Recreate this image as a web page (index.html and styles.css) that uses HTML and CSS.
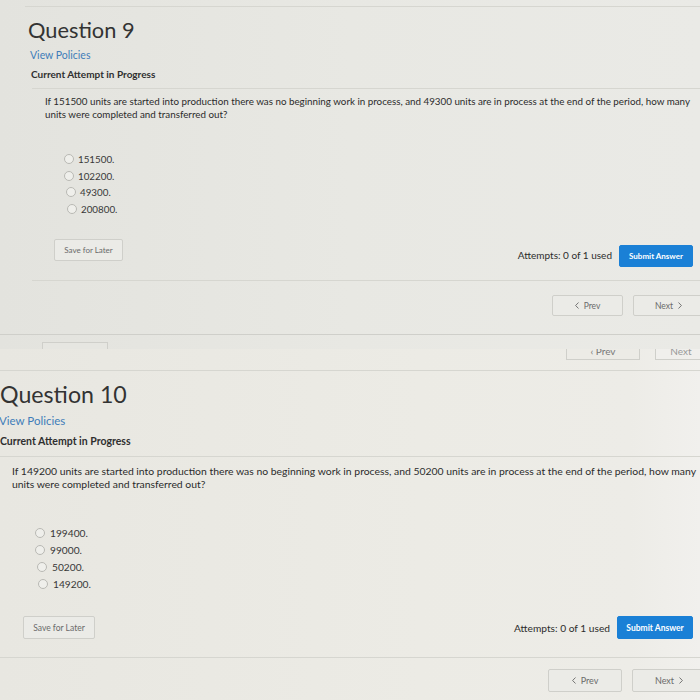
FILE: index.html
```html
<!DOCTYPE html>
<html>
<head>
<meta charset="utf-8">
<link rel="stylesheet" href="styles.css">
</head>
<body>
<section class="panel p1">
  <div class="rule rule-top"></div>
  <h1 class="title">Question 9</h1>
  <a class="policies">View Policies</a>
  <div class="attempt">Current Attempt in Progress</div>
  <div class="rule rule-q"></div>
  <p class="qtext">If 151500 units are started into production there was no beginning work in process, and 49300 units are in process at the end of the period, how many<br>units were completed and transferred out?</p>
  <ul class="options">
    <li><span class="radio"></span>151500.</li>
    <li><span class="radio"></span>102200.</li>
    <li><span class="radio"></span>49300.</li>
    <li><span class="radio"></span>200800.</li>
  </ul>
  <div class="actions">
    <button class="btn save">Save for Later</button>
    <div class="right">
      <span class="attempts">Attempts: 0 of 1 used</span>
      <button class="btn submit">Submit Answer</button>
    </div>
  </div>
  <div class="rule rule-nav"></div>
  <div class="nav">
    <button class="btn prev"><svg class="chev" viewBox="0 0 4 7"><polyline points="3.5,0.5 0.6,3.5 3.5,6.5"/></svg>Prev</button>
    <button class="btn next">Next<svg class="chev chev-r" viewBox="0 0 4 7"><polyline points="0.5,0.5 3.4,3.5 0.5,6.5"/></svg></button>
  </div>
  <div class="tail">
    <div class="tail-line"></div>
    <div class="tail-btn"></div>
  </div>
</section>
<section class="panel p2">
  <div class="head-nav">
    <div class="cut prev-cut"><span>&#8249; Prev</span></div>
    <div class="cut next-cut"><span>Next</span></div>
  </div>
  <div class="rule rule-top2"></div>
  <h1 class="title">Question 10</h1>
  <a class="policies">View Policies</a>
  <div class="attempt">Current Attempt in Progress</div>
  <div class="rule rule-q"></div>
  <p class="qtext">If 149200 units are started into production there was no beginning work in process, and 50200 units are in process at the end of the period, how many<br>units were completed and transferred out?</p>
  <ul class="options">
    <li><span class="radio"></span>199400.</li>
    <li><span class="radio"></span>99000.</li>
    <li><span class="radio"></span>50200.</li>
    <li><span class="radio"></span>149200.</li>
  </ul>
  <div class="actions">
    <button class="btn save">Save for Later</button>
    <div class="right">
      <span class="attempts">Attempts: 0 of 1 used</span>
      <button class="btn submit">Submit Answer</button>
    </div>
  </div>
  <div class="rule rule-nav"></div>
  <div class="nav">
    <button class="btn prev"><svg class="chev" viewBox="0 0 4 7"><polyline points="3.5,0.5 0.6,3.5 3.5,6.5"/></svg>Prev</button>
    <button class="btn next">Next<svg class="chev chev-r" viewBox="0 0 4 7"><polyline points="0.5,0.5 3.4,3.5 0.5,6.5"/></svg></button>
  </div>
</section>
</body>
</html>
```

FILE: styles.css
```css
html, body {
  margin: 0;
  padding: 0;
  width: 700px;
  height: 700px;
  overflow: hidden;
  font-family: Lato, "Liberation Sans", sans-serif;
  color: #2e2e2e;
}

.panel {
  position: relative;
  overflow: hidden;
  box-sizing: border-box;
}

.p1 {
  height: 349px;
  background: linear-gradient(90deg, #e3e3de 0%, #e8e8e3 50%, #eaeae6 100%);
  padding-left: 28px;
}

.p2 {
  height: 351px;
  background: linear-gradient(90deg, #e8e7e1 0%, #ecebe5 60%, #edece7 90%, #f1f0ed 100%);
  padding-left: 0;
}

.rule {
  height: 1px;
  background: #d6d6d0;
}

.btn {
  font-family: Lato, "Liberation Sans", sans-serif;
  box-sizing: border-box;
  border: 1px solid #cfcfca;
  background: #ebebe7;
  color: #6a6a6a;
  border-radius: 2px;
  padding: 0;
  cursor: pointer;
  display: inline-flex;
  align-items: center;
  justify-content: center;
}

.chev {
  width: 4px;
  height: 7px;
  margin-right: 5px;
  fill: none;
  stroke: #666;
  stroke-width: 0.9;
}

.chev-r {
  margin-right: 0;
  margin-left: 5px;
}

/* ---------- panel 1 ---------- */
.p1 .rule-top {
  margin-top: 6px;
  margin-left: -3px;
}

.title {
  margin: 0;
  font-weight: 400;
  color: #333;
}

.p1 .title {
  margin-top: 9px;
  font-size: 21.8px;
  line-height: 28px;
}

.policies {
  display: block;
  color: #3f7db9;
}

.p1 .policies {
  margin-top: 4px;
  margin-left: 2px;
  font-size: 10.5px;
  line-height: 14px;
}

.attempt {
  font-weight: 700;
  color: #2f2f2f;
}

.p1 .attempt {
  margin-top: 5px;
  margin-left: 3px;
  font-size: 10px;
  line-height: 14px;
}

.p1 .rule-q {
  margin-top: 7px;
  margin-left: 4px;
}

.qtext {
  margin: 0;
  white-space: nowrap;
  color: #2b2b2b;
}

.p1 .qtext {
  margin-top: 6px;
  margin-left: 17px;
  font-size: 9.8px;
  line-height: 13px;
}

.options {
  list-style: none;
  margin: 0;
  padding: 0;
}

.options li {
  display: flex;
  align-items: center;
  color: #383838;
}

.radio {
  box-sizing: border-box;
  border: 1px solid #b9b9b4;
  border-radius: 50%;
  background: #efefeb;
  flex: none;
}

.p1 .options {
  margin-top: 30px;
  margin-left: 36px;
}

.p1 .options li {
  height: 16.5px;
  font-size: 9.8px;
}

.p1 .options li:nth-child(3) { padding-left: 2px; }
.p1 .options li:nth-child(4) { padding-left: 3px; }

.p1 .radio {
  width: 10px;
  height: 10px;
  margin-right: 4px;
}

.actions {
  display: flex;
  justify-content: space-between;
  align-items: center;
}

.right {
  display: flex;
  align-items: center;
}

.attempts {
  color: #2c2c2c;
}

.submit {
  background: #1a80d6;
  border-color: #1a80d6;
  color: #fff;
  font-weight: 700;
}

.p1 .actions {
  margin-top: 22px;
  margin-left: 26px;
  margin-right: 7px;
  height: 28px;
}

.p1 .save {
  width: 69px;
  height: 22px;
  font-size: 8px;
  align-self: flex-start;
}

.p1 .right {
  align-self: flex-end;
}

.p1 .attempts {
  font-size: 10px;
  margin-right: 7px;
  margin-bottom: 2px;
}

.p1 .submit {
  width: 74px;
  height: 22px;
  font-size: 8px;
}

.p1 .rule-nav {
  margin-top: 13px;
  margin-left: 4px;
}

.nav {
  display: flex;
  justify-content: flex-end;
}

.p1 .nav {
  margin-top: 14px;
  margin-right: -4px;
  gap: 10px;
}

.p1 .prev,
.p1 .next {
  width: 71px;
  height: 21px;
  font-size: 8.5px;
}

.tail {
  position: relative;
}

.tail-line {
  margin-top: 18px;
  margin-left: -28px;
  height: 1px;
  background: #cfcfca;
}

.tail-btn {
  margin-top: 7px;
  margin-left: 14px;
  width: 66px;
  height: 20px;
  box-sizing: border-box;
  border: 1px solid #cfcfca;
  background: #e6e6e1;
}

/* ---------- panel 2 ---------- */
.head-nav {
  display: flex;
  justify-content: flex-end;
  gap: 15px;
  height: 11px;
}

.cut {
  box-sizing: border-box;
  height: 11px;
  border: 1px solid #cfcfca;
  border-top: none;
  overflow: hidden;
  font-size: 10px;
  line-height: 4px;
  color: #777;
  text-align: center;
  background: #ecebe6;
}

.prev-cut {
  width: 74px;
}

.next-cut {
  width: 52px;
  margin-right: -7px;
  background: #f0efec;
  color: #999;
}

.p2 .rule-top2 {
  margin-top: 10px;
}

.p2 .title {
  margin-top: 8px;
  margin-left: 0;
  font-size: 23.2px;
  line-height: 30px;
}

.p2 .policies {
  margin-top: 4px;
  margin-left: -1px;
  font-size: 11.5px;
  line-height: 15px;
}

.p2 .attempt {
  margin-top: 6px;
  font-size: 10.5px;
  line-height: 15px;
}

.p2 .rule-q {
  margin-top: 7px;
}

.p2 .qtext {
  margin-top: 8px;
  margin-left: 12px;
  font-size: 10.4px;
  line-height: 13px;
}

.p2 .options {
  margin-top: 33px;
  margin-left: 35px;
}

.p2 .options li {
  height: 17px;
  font-size: 10.2px;
}

.p2 .options li:nth-child(3) { padding-left: 2px; }
.p2 .options li:nth-child(4) { padding-left: 3px; }

.p2 .radio {
  width: 10px;
  height: 10px;
  margin-right: 5px;
}

.p2 .actions {
  margin-top: 24px;
  margin-left: 23px;
  margin-right: 7px;
  height: 23px;
}

.p2 .save {
  width: 72px;
  height: 23px;
  font-size: 8.5px;
}

.p2 .attempts {
  font-size: 10.2px;
  margin-right: 7px;
}

.p2 .submit {
  width: 76px;
  height: 23px;
  font-size: 8.5px;
}

.p2 .rule-nav {
  margin-top: 18px;
}

.p2 .nav {
  margin-top: 11px;
  margin-right: -6px;
  gap: 10px;
}

.p2 .prev,
.p2 .next {
  width: 74px;
  height: 23px;
  font-size: 9px;
}
```
